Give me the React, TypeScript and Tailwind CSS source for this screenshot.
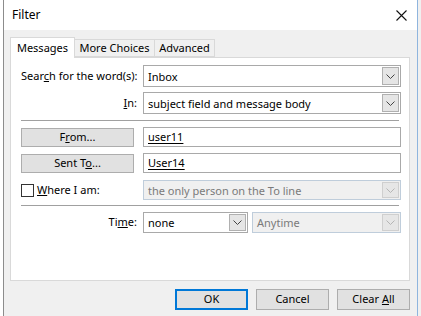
import type { ReactNode } from "react";

function Chevron({ disabled }: { disabled?: boolean }) {
  return (
    <svg width="9" height="5" viewBox="0 0 9 5" className="block">
      <path
        d="M0.5 0.5 L4.5 4.5 L8.5 0.5"
        fill="none"
        stroke={disabled ? "#b5b5b5" : "#444"}
        strokeWidth="1"
      />
    </svg>
  );
}

function Combo({
  value,
  disabled,
  className,
}: {
  value: string;
  disabled?: boolean;
  className?: string;
}) {
  return (
    <div
      className={`flex items-stretch border p-[1px] ${
        disabled
          ? "border-[#bfcddb] bg-[#f0f0f0] text-[#7a7a7a]"
          : "border-[#a9a9a9] bg-white text-black"
      } ${className ?? ""}`}
    >
      <span className="flex flex-1 items-center whitespace-nowrap pl-[3px] leading-none">
        {value}
      </span>
      <span
        className={`flex w-[17px] items-center justify-center border ${
          disabled ? "border-[#cfcfcf] bg-[#e6e6e6]" : "border-[#b0b0b0] bg-[#e5e5e5]"
        }`}
      >
        <Chevron disabled={disabled} />
      </span>
    </div>
  );
}

function Field({ children }: { children: ReactNode }) {
  return (
    <div className="flex h-[20px] w-[258px] items-center border border-[#a9a9a9] bg-white pl-[4px]">
      <span className="underline underline-offset-2">{children}</span>
    </div>
  );
}

function PickButton({ children }: { children: ReactNode }) {
  return (
    <div className="flex h-[19px] w-[113px] items-center justify-center border border-[#adadad] bg-[#e1e1e1]">
      <span className="whitespace-nowrap">{children}</span>
    </div>
  );
}

function Separator() {
  return <div className="h-px w-[378px] bg-[#a0a0a0]" />;
}

function DialogButton({
  children,
  primary,
}: {
  children: ReactNode;
  primary?: boolean;
}) {
  return (
    <div
      className={`flex h-[21px] w-[73px] items-center justify-center bg-[#e1e1e1] ${
        primary ? "border-2 border-[#0078d7]" : "border border-[#adadad]"
      }`}
    >
      <span className="whitespace-nowrap">{children}</span>
    </div>
  );
}

export default function App() {
  return (
    <div
      className="flex h-[316px] w-[421px] bg-white text-[11px] text-black"
      style={{ fontFamily: '"Noto Sans", "Open Sans", sans-serif' }}
    >
      <div className="w-[3px]" />
      <div className="flex w-[414px] flex-col border-l border-[#8c8c8c]">
        <div className="flex h-[30px] items-center justify-between bg-white pl-[8px] pr-[10px]">
          <span className="text-[12px]">Filter</span>
          <svg width="11" height="11" viewBox="0 0 11 11">
            <path d="M0.5 0.5 L10.5 10.5 M10.5 0.5 L0.5 10.5" stroke="#111" strokeWidth="1.1" />
          </svg>
        </div>

        <div className="flex flex-1 flex-col bg-[#f0f0f0] pl-[6px]">
          {/* tabs */}
          <div className="mt-[7px] flex items-end">
            <div className="relative z-10 -mb-px flex h-[21px] w-[65px] items-start justify-center whitespace-nowrap border border-b-0 border-[#d9d9d9] bg-white pt-[2px]">
              Messages
            </div>
            <div className="flex h-[18px] w-[80px] items-center justify-center whitespace-nowrap border border-l-0 border-[#d9d9d9] bg-[#f0f0f0]">
              More Choices
            </div>
            <div className="flex h-[18px] w-[60px] items-center justify-center whitespace-nowrap border border-l-0 border-[#d9d9d9] bg-[#f0f0f0]">
              Advanced
            </div>
          </div>

          {/* panel */}
          <div className="flex h-[224px] w-[400px] flex-col border border-[#d9d9d9] bg-white pl-[10px] pt-[7px]">
            <div className="flex items-center">
              <span className="w-[116px] whitespace-nowrap text-right">
                Sear<span className="underline">c</span>h for the word(s):
              </span>
              <Combo value="Inbox" className="ml-[6px] h-[22px] w-[258px]" />
            </div>
            <div className="mt-[5px] flex items-center">
              <span className="w-[116px] text-right">
                <span className="underline">I</span>n:
              </span>
              <Combo
                value="subject field and message body"
                className="ml-[6px] h-[22px] w-[258px]"
              />
            </div>

            <div className="mt-[6px]">
              <Separator />
            </div>

            <div className="mt-[6px] flex items-center">
              <PickButton>
                F<span className="underline">r</span>om...
              </PickButton>
              <div className="ml-[9px]">
                <Field>user11</Field>
              </div>
            </div>
            <div className="mt-[6px] flex items-center">
              <PickButton>
                Sent T<span className="underline">o</span>...
              </PickButton>
              <div className="ml-[9px]">
                <Field>User14</Field>
              </div>
            </div>

            <div className="mt-[7px] flex items-center">
              <div className="flex w-[122px] items-center">
                <span className="h-[13px] w-[13px] border border-[#333] bg-white" />
                <span className="ml-[3px] whitespace-nowrap">
                  <span className="underline">W</span>here I am:
                </span>
              </div>
              <Combo
                value="the only person on the To line"
                disabled
                className="h-[20px] w-[258px]"
              />
            </div>

            <div className="mt-[5px]">
              <Separator />
            </div>

            <div className="mt-[6px] flex items-center">
              <span className="w-[116px] text-right">
                Ti<span className="underline">m</span>e:
              </span>
              <Combo value="none" className="ml-[6px] h-[21px] w-[105px]" />
              <Combo
                value="Anytime"
                disabled
                className="ml-[4px] h-[21px] w-[149px]"
              />
            </div>
          </div>

          {/* dialog buttons */}
          <div className="mt-[8px] flex gap-[8px] pl-[165px]">
            <DialogButton primary>OK</DialogButton>
            <DialogButton>Cancel</DialogButton>
            <DialogButton>
              Clear <span className="underline">A</span>ll
            </DialogButton>
          </div>
        </div>
      </div>
      <div className="w-px bg-[#8fb5de]" />
      <div className="flex-1 bg-[#f0f0f0]" />
    </div>
  );
}
